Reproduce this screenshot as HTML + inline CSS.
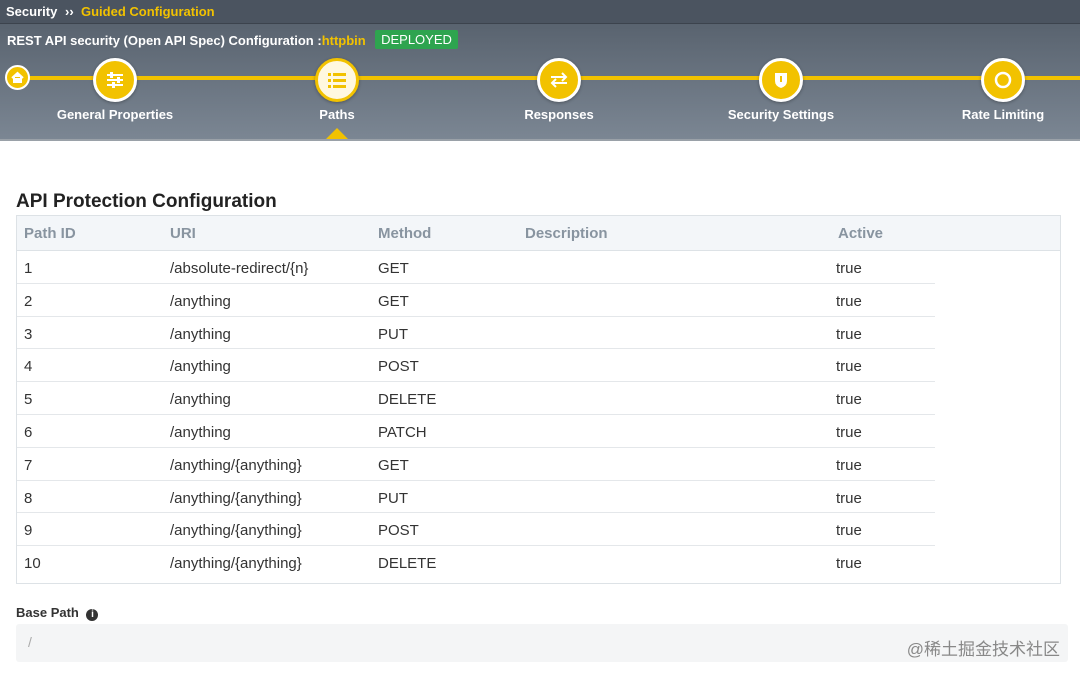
<!DOCTYPE html>
<html><head><meta charset="utf-8"><style>
*{margin:0;padding:0;box-sizing:border-box}
body{width:1080px;height:679px;overflow:hidden;background:#fff;font-family:"Liberation Sans",Arial,sans-serif;position:relative}
.top{position:absolute;left:0;top:0;width:1080px;height:24px;background:#4b5460;border-bottom:1px solid #3c434d}
.top span{position:absolute;top:4px;font-size:13px;font-weight:bold}
.hdr{position:absolute;left:0;top:24px;width:1080px;height:117px;background:linear-gradient(#59636f,#7b8693);border-bottom:2px solid #9aa1a8}
.t2{position:absolute;left:7px;top:9px;font-size:13px;font-weight:bold;color:#fff}
.dep{position:absolute;left:375px;top:6px;width:83px;height:19px;background:#2ea44f;color:#fff;font-size:13px;text-align:center;line-height:19px;border-radius:2px}
.line{position:absolute;left:20px;top:52px;width:1060px;height:4px;background:#f2c200}
.c{position:absolute;width:44px;height:44px;border-radius:50%;background:#f2c200;border:3px solid #fff;top:34px;box-shadow:0 1px 3px rgba(0,0,0,.3)}
.c svg{position:absolute;left:9px;top:9px}
.lbl{position:absolute;top:83px;width:200px;text-align:center;color:#fff;font-size:13px;font-weight:bold}
h2{position:absolute;left:16px;top:191px;font-size:19px;font-weight:bold;color:#222}
.tbl{position:absolute;left:16px;top:215px;width:1045px;height:369px;border:1px solid #dde2e6}
.th{height:35px;background:#f3f6f9;border-bottom:1px solid #dde2e6;position:relative}
.th span{position:absolute;top:9px;font-size:15px;font-weight:bold;color:#8894a0}
.r{height:32.8px;border-bottom:1px solid #e4e7ea;position:relative;width:918px}
.r:last-child{border-bottom:none}
.r span{position:absolute;top:9px;font-size:15px;color:#333}
.bp{position:absolute;left:16px;top:605px;font-size:13px;font-weight:bold;color:#333}
.inp{position:absolute;left:16px;top:624px;width:1052px;height:38px;background:#f4f5f6;border-radius:3px}
</style></head><body>
<div class="top"><span style="left:6px;color:#fff">Security</span><span style="left:65px;color:#fff">››</span><span style="left:81px;color:#f2c200">Guided Configuration</span></div>
<div class="hdr">
<div class="t2">REST API security (Open API Spec) Configuration :<span style="color:#f2c200">httpbin</span></div>
<div class="dep">DEPLOYED</div>
<div class="line"></div>
<div style="position:absolute;left:5px;top:41px;width:25px;height:25px;border-radius:50%;background:#f2c200;border:2px solid #fff"><svg width="21" height="21" viewBox="0 0 21 21" style="position:absolute;left:0;top:0"><path d="M5 11 L10.5 6 L16 11 M7 10 V15 H14 V10" stroke="#fff" stroke-width="2" fill="#fff"/></svg></div>
<div class="c" style="left:93px"><svg width="20" height="20"><g stroke="#fff" stroke-width="2"><line x1="2" y1="5" x2="18" y2="5"/><line x1="2" y1="10" x2="18" y2="10"/><line x1="2" y1="15" x2="18" y2="15"/></g><g fill="#fff"><rect x="5" y="2" width="3" height="6"/><rect x="12" y="7" width="3" height="6"/><rect x="7" y="12" width="3" height="6"/></g></svg></div>
<div class="c" style="left:315px;background:#fff8e0;border-color:#f2c200"><svg width="20" height="20" fill="#f2c200"><rect x="1" y="3" width="3" height="3"/><rect x="6" y="3" width="13" height="3"/><rect x="1" y="9" width="3" height="3"/><rect x="6" y="9" width="13" height="3"/><rect x="1" y="15" width="3" height="3"/><rect x="6" y="15" width="13" height="3"/></svg></div>
<div class="c" style="left:537px"><svg width="20" height="20" stroke="#fff" stroke-width="2" fill="none"><path d="M2 7 H17 M13 3 L17 7 L13 11 M18 13 H3 M7 9 L3 13 L7 17"/></svg></div>
<div class="c" style="left:759px"><svg width="20" height="20"><path d="M4 3 H16 V11 Q16 16 10 18 Q4 16 4 11 Z" fill="#fff"/><rect x="9" y="6" width="2" height="6" fill="#f2c200"/></svg></div>
<div class="c" style="left:981px"><svg width="20" height="20"><circle cx="10" cy="10" r="7" stroke="#fff" stroke-width="2.5" fill="none"/></svg></div>
<div class="lbl" style="left:15px">General Properties</div>
<div class="lbl" style="left:237px">Paths</div>
<div class="lbl" style="left:459px">Responses</div>
<div class="lbl" style="left:681px">Security Settings</div>
<div class="lbl" style="left:903px">Rate Limiting</div>
<div style="position:absolute;left:326px;top:104px;width:0;height:0;border-left:11px solid transparent;border-right:11px solid transparent;border-bottom:11px solid #f2c200"></div>
</div>
<h2>API Protection Configuration</h2>
<div class="tbl">
<div class="th"><span style="left:7px">Path ID</span><span style="left:153px">URI</span><span style="left:361px">Method</span><span style="left:508px">Description</span><span style="left:821px">Active</span></div>
<div class="r"><span style="left:7px">1</span><span style="left:153px">/absolute-redirect/{n}</span><span style="left:361px">GET</span><span style="left:819px">true</span></div>
<div class="r"><span style="left:7px">2</span><span style="left:153px">/anything</span><span style="left:361px">GET</span><span style="left:819px">true</span></div>
<div class="r"><span style="left:7px">3</span><span style="left:153px">/anything</span><span style="left:361px">PUT</span><span style="left:819px">true</span></div>
<div class="r"><span style="left:7px">4</span><span style="left:153px">/anything</span><span style="left:361px">POST</span><span style="left:819px">true</span></div>
<div class="r"><span style="left:7px">5</span><span style="left:153px">/anything</span><span style="left:361px">DELETE</span><span style="left:819px">true</span></div>
<div class="r"><span style="left:7px">6</span><span style="left:153px">/anything</span><span style="left:361px">PATCH</span><span style="left:819px">true</span></div>
<div class="r"><span style="left:7px">7</span><span style="left:153px">/anything/{anything}</span><span style="left:361px">GET</span><span style="left:819px">true</span></div>
<div class="r"><span style="left:7px">8</span><span style="left:153px">/anything/{anything}</span><span style="left:361px">PUT</span><span style="left:819px">true</span></div>
<div class="r"><span style="left:7px">9</span><span style="left:153px">/anything/{anything}</span><span style="left:361px">POST</span><span style="left:819px">true</span></div>
<div class="r"><span style="left:7px">10</span><span style="left:153px">/anything/{anything}</span><span style="left:361px">DELETE</span><span style="left:819px">true</span></div>
</div>
<div class="bp">Base Path <span style="display:inline-block;width:12px;height:12px;border-radius:50%;background:#333;color:#fff;font-size:10px;text-align:center;line-height:12px;margin-left:4px">i</span></div>
<div class="inp"><span style="position:absolute;left:12px;top:10px;color:#aaa;font-size:14px">/</span><span style="position:absolute;right:8px;top:11px;color:#888;font-size:17px;font-family:'Liberation Sans','Noto Sans CJK SC',sans-serif">@稀土掘金技术社区</span></div>
</body></html>
